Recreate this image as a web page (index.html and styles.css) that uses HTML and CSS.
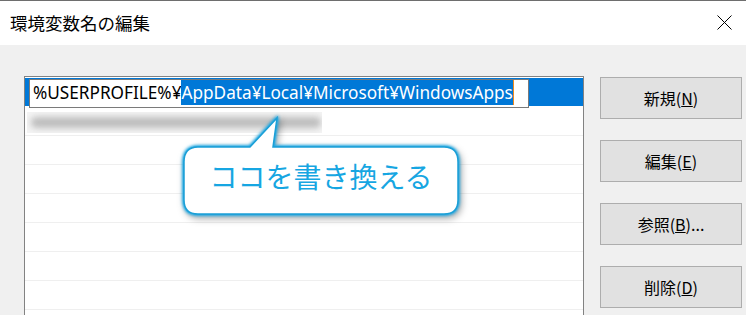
FILE: index.html
```html
<!DOCTYPE html>
<html lang="ja">
<head>
  <meta charset="UTF-8" />
  <title>環境変数名の編集</title>
  <link rel="stylesheet" href="styles.css">
</head>
<body>
  <div class="titlebar">
    <span class="title">環境変数名の編集</span>
    <svg class="close" width="15" height="15" viewBox="0 0 15 15">
      <path d="M0.5 0.5 L14.5 14.5 M14.5 0.5 L0.5 14.5" stroke="#000" stroke-width="1" fill="none"/>
    </svg>
  </div>

  <div class="content">
    <div class="list">
      <div class="row selected">
        <div class="edit"><span>%USERPROFILE%¥</span><span class="sel">AppData¥Local¥Microsoft¥WindowsApps</span><span class="caret"></span></div>
      </div>
      <div class="row"><div class="smudge"><div class="smudge-bar"></div></div></div>
      <div class="row"></div>
      <div class="row"></div>
      <div class="row"></div>
      <div class="row"></div>
      <div class="row"></div>
      <div class="row"></div>

      <div class="bubble">
        <svg class="bubble-shape" width="276" height="98" viewBox="0 0 276 98">
          <path d="M15 30 H67 L94 1 L90 30 H261 Q275 30 275 45 V83 Q275 97 261 97 H15 Q1 97 1 83 V45 Q1 30 15 30 Z"
                fill="#fff" stroke="#1b9fd6" stroke-width="1.5"/>
        </svg>
        <div class="bubble-text">ココを書き換える</div>
      </div>
    </div>

    <div class="buttons">
      <button>新規(<u>N</u>)</button>
      <button>編集(<u>E</u>)</button>
      <button>参照(<u>B</u>)...</button>
      <button>削除(<u>D</u>)</button>
    </div>
  </div>
</body>
</html>
```

FILE: styles.css
```css
body {
  margin: 0;
  height: 315px;
  overflow: hidden;
  background: #f0f0f0;
  font-family: "Noto Sans", "Noto Sans CJK JP", sans-serif;
}
.titlebar {
  height: 44px;
  background: #fff;
  border-top: 1px solid #6e6e6e;
  display: flex;
  align-items: center;
  justify-content: space-between;
  padding: 0 14px 0 10px;
}
.title {
  font-family: "Noto Sans CJK JP", sans-serif;
  font-size: 17.5px;
  color: #000;
  margin-top: -1px;
}
.close {
  margin-top: -1px;
}
.content {
  display: flex;
  align-items: flex-start;
  padding-left: 24px;
  padding-top: 31px;
}
.list {
  position: relative;
  width: 558px;
  height: 300px;
  background: #fff;
  border: 1px solid #828282;
  padding-top: 1px;
}
.row {
  position: relative;
  height: 28px;
  border-bottom: 1px solid #efefef;
}
.row.selected {
  background: #0078d7;
  border-bottom-color: #fff;
}
.edit {
  position: absolute;
  left: 4px;
  top: 1px;
  width: 495px;
  height: 27px;
  background: #fff;
  border: 1px solid #7a7a7a;
  padding-left: 3px;
  display: flex;
  align-items: flex-start;
  font-size: 17.2px;
  line-height: 25px;
  color: #000;
  white-space: nowrap;
}
.sel {
  background: #0078d7;
  color: #fff;
}
.caret {
  width: 1px;
  height: 25px;
  background: #f08a1c;
}
.smudge {
  position: absolute;
  left: 2px;
  top: 5px;
  width: 295px;
  height: 21px;
  background: #f4f4f4;
  overflow: hidden;
}
.smudge-bar {
  margin: 5px 0 0 4px;
  width: 290px;
  height: 11px;
  background: #bdbdbd;
  border-radius: 5px;
  filter: blur(3px);
}
.bubble {
  position: absolute;
  left: 158px;
  top: 40px;
  width: 276px;
  height: 98px;
}
.bubble-shape {
  position: absolute;
  left: 0;
  top: 0;
  overflow: visible;
  filter: drop-shadow(0 0 1.5px #19a8e6) drop-shadow(0 0 1.5px #19a8e6) drop-shadow(2px 3px 3px rgba(0, 0, 0, 0.3));
}
.bubble-text {
  position: relative;
  padding-top: 30px;
  height: 58px;
  display: flex;
  align-items: center;
  justify-content: center;
  font-family: "Noto Sans CJK JP", sans-serif;
  font-size: 28px;
  color: #16a6e2;
}
.buttons {
  display: flex;
  flex-direction: column;
  gap: 21px;
  margin-left: 16px;
  padding-top: 1px;
}
button {
  width: 142px;
  height: 42px;
  background: #e1e1e1;
  border: 1px solid #adadad;
  font-family: "Noto Sans CJK JP", sans-serif;
  font-size: 16px;
  color: #000;
  padding: 0;
}
```
